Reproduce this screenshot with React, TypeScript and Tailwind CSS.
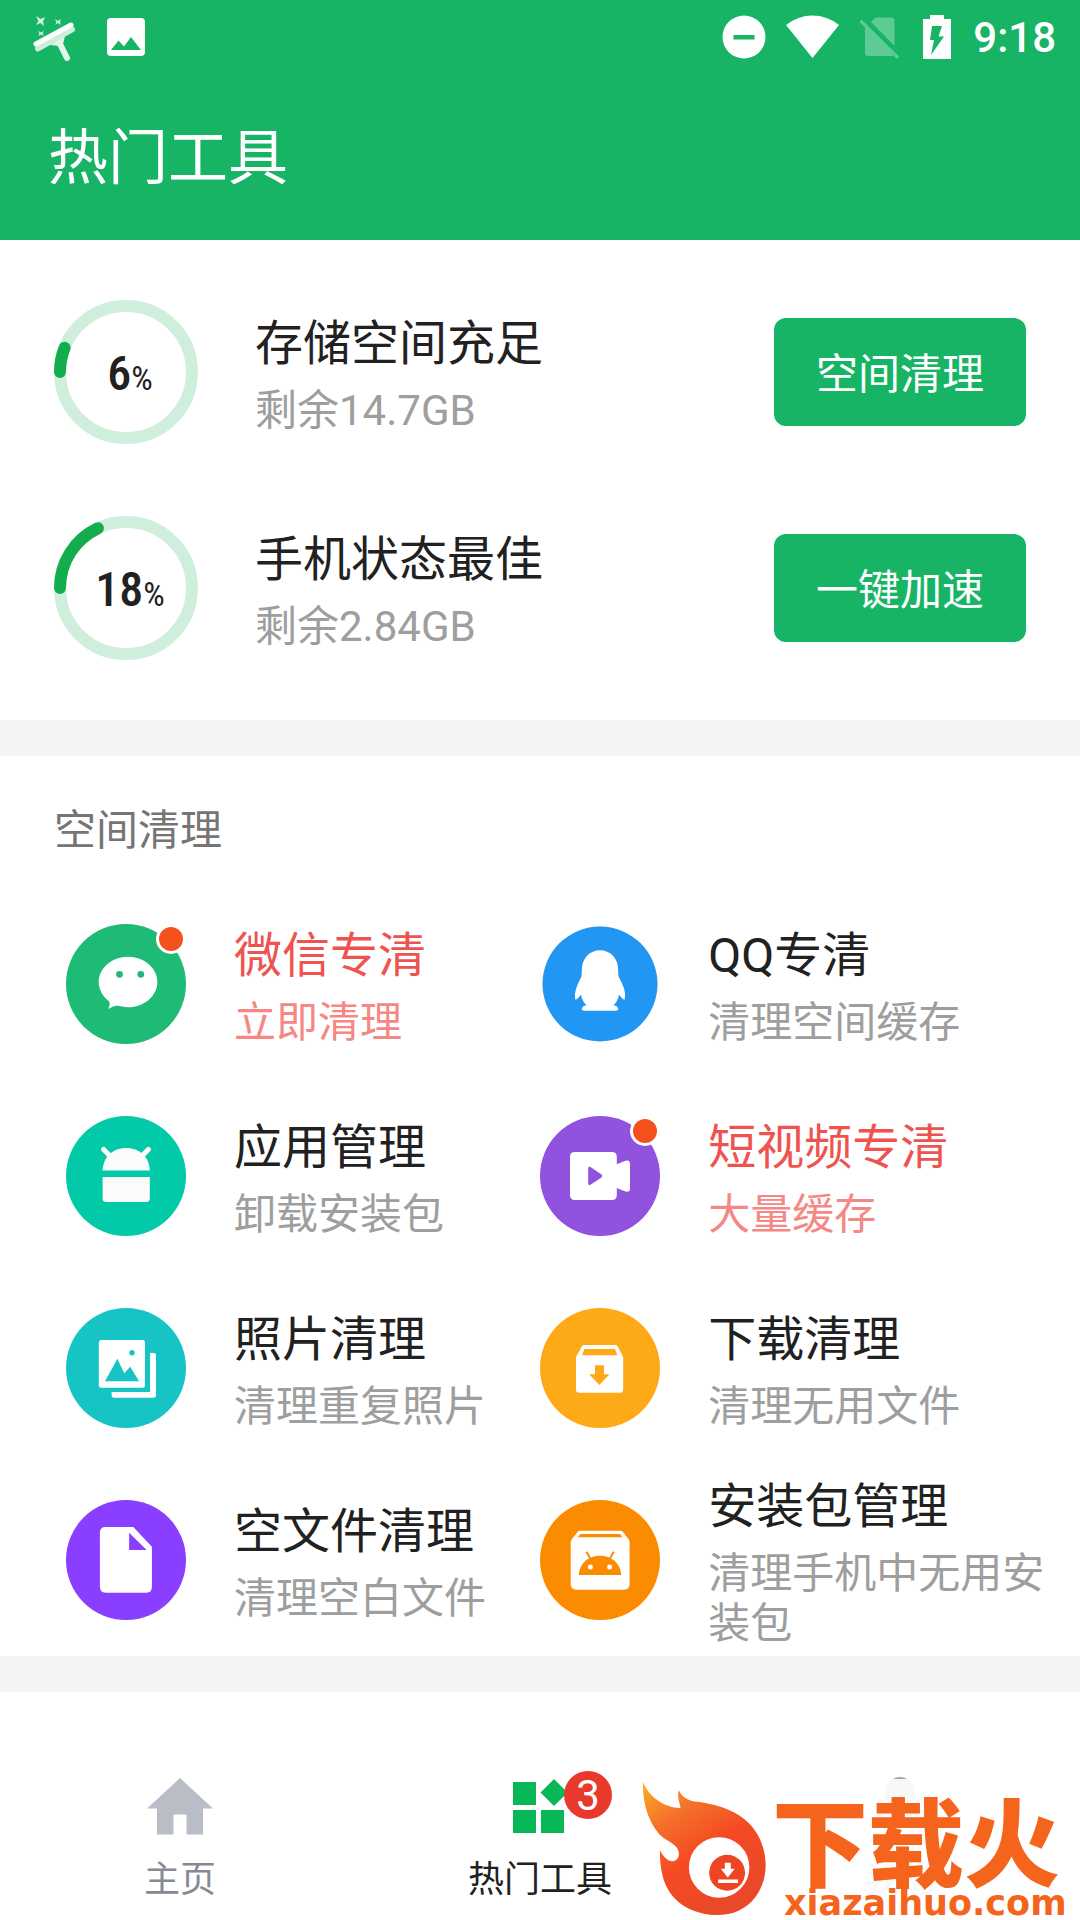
import type { ReactNode } from "react"

type Tool = {
  title: string
  desc: string
  icon: ReactNode
  hot?: boolean
}

const StatusBar = () => (
  <div className="flex h-[72px] items-center justify-between pl-[30px] pr-6 pt-0.5">
    <div className="flex items-center gap-[29px]">
      <svg className="h-12 w-12" viewBox="0 0 48 48" fill="none">
        <path d="M28 27L37 45" stroke="#e2f6eb" strokeWidth="6" strokeLinecap="round" />
        <path d="M20 32L35 23L33 31L29 33Z" fill="#e2f6eb" />
        <path d="M8 35.500L42 16.500" stroke="#cdeedd" strokeWidth="6" strokeLinecap="round" />
        <path d="M6 31L41 12" stroke="#fff" strokeWidth="5" strokeLinecap="round" />
        <path d="M6 3L10.500 6L15 4L13 8.500L14 13L10.500 10L6 12L8.500 8Z" fill="#d6f2e2" />
        <path d="M25 6L28 8L31 6L30 9L31 12L28 10L25 12L26.500 9Z" fill="#d6f2e2" />
        <path d="M8 18L11 19.500L14 18L12.500 20.500L14 23L11 21.500L8 23L9.500 20.500Z" fill="#d6f2e2" />
      </svg>
      <svg className="h-[38px] w-[38px]" viewBox="0 0 38 38">
        <rect width="38" height="38" rx="4" fill="#fff" />
        <path d="M4 32L11.500 22.500L17 28.500L24 19L34 32Z" fill="#18b466" />
      </svg>
    </div>
    <div className="flex items-center gap-5 text-white">
      <svg className="h-11 w-11" viewBox="0 0 44 44">
        <circle cx="22" cy="22" r="21.500" fill="#fff" />
        <rect x="11.500" y="20" width="21" height="4.500" fill="#18b466" />
      </svg>
      <svg className="h-11 w-[53px]" viewBox="0 0 53 44">
        <path d="M0 10Q12 0.500 26.500 0.500T53 10L26.500 43Z" fill="#fff" />
      </svg>
      <svg className="h-11 w-10" viewBox="0 0 40 44" fill="#5dcb94">
        <path d="M12 7L16.500 2.500H32Q35.500 2.500 35.500 6V31Z" />
        <path d="M6 11L34.500 40Q33.500 41 32 41H9Q6 41 6 38Z" />
        <path d="M2.500 4.500L40 41.500L38 44L0.500 7Z" />
      </svg>
      <div className="flex items-center gap-[22px] pl-1">
        <svg className="h-11 w-7" viewBox="0 0 28 44">
          <path d="M7 0H21V4H28V44H0V4H7Z" fill="#fff" />
          <path d="M9 11H19L15.500 21.500H21L8 40L11 25H7Z" fill="#18b466" />
        </svg>
        <span className="pt-0.5 text-[42px] font-medium leading-[50px]">9:18</span>
      </div>
    </div>
  </div>
)

const Ring = ({ percent }: { percent: number }) => (
  <div className="relative flex h-36 w-36 shrink-0 items-center justify-center">
    <svg className="absolute inset-0 h-full w-full" viewBox="0 0 144 144" fill="none">
      <circle cx="72" cy="72" r="66" stroke="#d0eedc" strokeWidth="12" />
      <circle
        cx="72"
        cy="72"
        r="66"
        stroke="#13ae4b"
        strokeWidth="12"
        strokeLinecap="round"
        pathLength="100"
        strokeDasharray={`${percent} 100`}
        transform="rotate(180 72 72)"
      />
    </svg>
    <div className="relative flex items-baseline pl-2 pt-2 font-['Roboto_Condensed','Open_Sans_Condensed',Roboto,sans-serif] text-[#212121]">
      <span className="text-[48px] font-medium leading-[50px]">{percent}</span>
      <span className="text-[34px] leading-[50px]">%</span>
    </div>
  </div>
)

const StatusRow = ({
  percent,
  title,
  desc,
  action,
}: {
  percent: number
  title: string
  desc: string
  action: string
}) => (
  <div className="flex h-[216px] items-center px-[54px]">
    <Ring percent={percent} />
    <div className="ml-[57px] flex flex-1 flex-col gap-3 pt-1.5">
      <h2 className="text-[48px] leading-[60px] text-[#212121]">{title}</h2>
      <p className="text-[42px] leading-[50px] text-[#9e9e9e]">{desc}</p>
    </div>
    <button className="h-[108px] w-[252px] rounded-xl bg-[#18b466] pt-1.5 text-[42px] leading-[50px] text-white">
      {action}
    </button>
  </div>
)

const WechatIcon = () => (
  <svg className="h-full w-full" viewBox="0 0 120 120">
    <circle cx="60" cy="60" r="60" fill="#1dbb75" />
    <path
      d="M62 32.700C78 32.700 91.400 44 91.400 58S78 83.300 62 83.300C58 83.300 54 81.500 50.500 81.700C47 82 45 83.500 42.300 85C43.500 82 44.300 80 43.200 77.500C37 72.500 32.700 66 32.700 58C32.700 44 46 32.700 62 32.700Z"
      fill="#fff"
    />
    <circle cx="53.500" cy="50.300" r="3.400" fill="#1dbb75" />
    <circle cx="74.800" cy="50.300" r="3.400" fill="#1dbb75" />
  </svg>
)

const QQIcon = () => (
  <svg className="h-full w-full" viewBox="0 0 120 120">
    <circle cx="60" cy="60" r="57.500" fill="#2296f3" />
    <path
      d="M60 26.300C70 26.300 78.200 34 78.200 46C78.200 48 78.200 50 78.600 52.700C82 59 85 65 85 70C85 73 85 74.500 84.500 75.700C82.500 75 80.500 73 79 70.500C78.500 75 76 79 73.600 81.300C76.500 82 78.200 83 78.200 85C78 86.500 76 86.700 73 86.700H47C44 86.700 42 86.500 41.800 85C41.800 83 43.500 82 46.400 81.300C44 79 41.500 75 41 70.500C39.500 73 37.500 75 35.400 75.700C35 74.500 35 73 35 70C35.500 65 38 59 41.400 52.700C41.800 50 41.800 48 41.800 46C42 34 50 26.300 60 26.300Z"
      fill="#fff"
    />
  </svg>
)

const AppsIcon = () => (
  <svg className="h-full w-full" viewBox="0 0 120 120">
    <circle cx="60" cy="60" r="60" fill="#02c9a8" />
    <path d="M37.500 33.300L44 40M82.500 33.300L76 40" stroke="#fbfbfb" strokeWidth="5" strokeLinecap="round" />
    <path d="M36.600 54.500C37 41 47 32 60.200 32S83.500 41 83.800 54.500Z" fill="#fbfbfb" />
    <path d="M36.600 61H83.800V82.500Q83.800 86 80.300 86H40.100Q36.600 86 36.600 82.500Z" fill="#fbfbfb" />
  </svg>
)

const VideoIcon = () => (
  <svg className="h-full w-full" viewBox="0 0 120 120">
    <circle cx="60" cy="60" r="60" fill="#9152de" />
    <rect x="30" y="36" width="46.800" height="48" rx="4.500" fill="#fff" />
    <path
      d="M76 48.500L85.500 44.700Q90 43.500 90 48V72.500Q90 76.500 85.500 75.500L76 71.700Z"
      fill="#fff"
    />
    <path d="M48.200 52Q48.500 50 50.500 51L61.500 58.500Q63 60 61.500 61.500L50.500 68.800Q48.500 69.800 48.200 68Z" fill="#9152de" />
  </svg>
)

const PhotosIcon = () => (
  <svg className="h-full w-full" viewBox="0 0 120 120">
    <circle cx="60" cy="60" r="60" fill="#16c4c6" />
    <rect x="32.800" y="32" width="46.200" height="47.700" rx="2.500" fill="#fff" />
    <path d="M39 73.300L51.400 50.700L58.300 65.300L64.200 58.700L73.100 73.300Z" fill="#16c4c6" />
    <circle cx="66" cy="44.700" r="2.700" fill="#16c4c6" />
    <path d="M84.100 45H88Q90 45 90 47V87Q90 89.700 87.300 89.700H48Q45.600 89.700 45.600 87V84H84.100Z" fill="#fff" />
  </svg>
)

const DownloadIcon = () => (
  <svg className="h-full w-full" viewBox="0 0 120 120">
    <circle cx="60" cy="60" r="60" fill="#fea918" />
    <path
      d="M44 37H75.500Q77 37 78 39L83.200 49V81.500Q83.200 84.700 80 84.700H39.200Q36 84.700 36 81.500V49L41.500 39Q42.500 37 44 37Z"
      fill="#fff"
    />
    <path d="M44.500 41H75L77.300 47.300H42Z" fill="#fea918" />
    <path d="M55 57.300H64V66.300H69.500L59.400 77L49.200 66.300H55Z" fill="#fea918" />
  </svg>
)

const FileIcon = () => (
  <svg className="h-full w-full" viewBox="0 0 120 120">
    <circle cx="60" cy="60" r="60" fill="#8a3eff" />
    <path
      d="M39.500 27H67.300L85.900 46.700V87Q85.900 92.700 80.500 92.700H39.500Q33.900 92.700 33.900 87V32.500Q33.900 27 39.500 27Z"
      fill="#fff"
    />
    <path d="M63.100 32.700V50H80.700Z" fill="#8a3eff" />
  </svg>
)

const ApkIcon = () => (
  <svg className="h-full w-full" viewBox="0 0 120 120">
    <circle cx="60" cy="60" r="60" fill="#fb8c01" />
    <path
      d="M40 30.700H80.500Q82 30.700 83 32L88.500 39Q89.600 40.500 89.600 42.500V84Q89.600 89.700 84 89.700H36.500Q30.700 89.700 30.700 84V42.500Q30.700 40.500 32 39L37.500 32Q38.500 30.700 40 30.700Z"
      fill="#fff"
    />
    <path d="M40.500 34H80L82.300 37.200H37.700Z" fill="#fb8c01" />
    <path d="M38.900 75C39 64 48 55.700 60 55.700S81 64 81.100 75Z" fill="#fb8c01" />
    <path d="M46.400 51.700L50.400 58.500M73.900 51.700L69.800 58.500" stroke="#fb8c01" strokeWidth="2" />
    <circle cx="50.400" cy="67" r="2.500" fill="#fff" />
    <circle cx="69.600" cy="67" r="2.500" fill="#fff" />
  </svg>
)

const tools: Tool[] = [
  { title: "微信专清", desc: "立即清理", icon: <WechatIcon />, hot: true },
  { title: "QQ专清", desc: "清理空间缓存", icon: <QQIcon /> },
  { title: "应用管理", desc: "卸载安装包", icon: <AppsIcon /> },
  { title: "短视频专清", desc: "大量缓存", icon: <VideoIcon />, hot: true },
  { title: "照片清理", desc: "清理重复照片", icon: <PhotosIcon /> },
  { title: "下载清理", desc: "清理无用文件", icon: <DownloadIcon /> },
  { title: "空文件清理", desc: "清理空白文件", icon: <FileIcon /> },
  { title: "安装包管理", desc: "清理手机中无用安装包", icon: <ApkIcon /> },
]

const ToolItem = ({ title, desc, icon, hot }: Tool) => (
  <button className="flex h-48 items-center gap-12 text-left">
    <span className="relative h-[120px] w-[120px] shrink-0">
      {icon}
      {hot && (
        <span className="absolute right-0 top-0 h-[30px] w-[30px] rounded-full border-3 border-white bg-[#f5511e]" />
      )}
    </span>
    <span className="flex flex-col gap-3 pt-1.5">
      <span className={`text-[48px] leading-[60px] ${hot ? "text-[#ef5350]" : "text-[#212121]"}`}>{title}</span>
      <span className={`text-[42px] leading-[50px] ${hot ? "text-[#f58784]" : "text-[#9e9e9e]"}`}>{desc}</span>
    </span>
  </button>
)

const Tab = ({ label, icon, active }: { label: string; icon: ReactNode; active?: boolean }) => (
  <button className="flex flex-1 flex-col items-center gap-[15px]">
    <span className="relative h-[72px] w-[72px]">{icon}</span>
    <span className={`text-[36px] leading-[46px] ${active ? "text-[#212121]" : "text-[#868a96]"}`}>{label}</span>
  </button>
)

const SiteMark = () => (
  <div className="absolute bottom-0 right-0 flex h-[141px] w-[443px] items-end bg-white/93">
    <svg className="mb-1 ml-[3px] h-[137px] w-32 shrink-0" viewBox="60 115 385 410">
      <defs>
        <linearGradient id="flame" x1="0" y1="0" x2="0.600" y2="1">
          <stop offset="0" stopColor="#fdb026" />
          <stop offset="0.300" stopColor="#f4702a" />
          <stop offset="0.600" stopColor="#f54a22" />
          <stop offset="1" stopColor="#e9482a" />
        </linearGradient>
      </defs>
      <path
        d="M69 122C85 165 130 200 182 201C180 185 170 168 177 148C185 168 205 178 225 182C300 190 375 215 413 280C447 340 447 415 408 468C375 512 325 528 270 522C190 512 142 465 128 405C122 380 119 355 120 328C130 348 145 363 160 361C178 358 181 338 172 322C160 305 138 300 118 280C88 245 66 190 69 122Z"
        fill="url(#flame)"
      />
      <circle cx="298" cy="380" r="91" fill="#fff" />
      <circle cx="322" cy="396" r="54" fill="#ee4524" />
      <path d="M315 366H333V384H345L324 410L303 384H315ZM295 416H355V427H295Z" fill="#fff" />
    </svg>
    <div className="flex flex-col text-[#f4641d]">
      <span className="pl-1 text-[96px] font-black leading-[80px]">下载火</span>
      <span className="pl-4 font-['DejaVu_Sans',sans-serif] text-[35px] font-bold leading-[34px]">xiazaihuo.com</span>
    </div>
  </div>
)

export default function App() {
  return (
    <div
      lang="zh-CN"
      className="flex min-h-screen flex-col bg-white font-[Roboto,'Noto_Sans_CJK_SC',sans-serif]"
    >
      <header className="bg-[#18b466] text-white">
        <StatusBar />
        <h1 className="flex h-[168px] items-center px-12 pt-1.5 text-[60px] leading-[72px]">热门工具</h1>
      </header>

      <main>
        <section className="py-6">
          <StatusRow percent={6} title="存储空间充足" desc="剩余14.7GB" action="空间清理" />
          <StatusRow percent={18} title="手机状态最佳" desc="剩余2.84GB" action="一键加速" />
        </section>
        <div className="h-9 bg-[#f4f4f4]" />
        <section>
          <h2 className="flex h-[132px] items-center px-[54px] pt-[18px] text-[42px] leading-[50px] text-[#757575]">
            空间清理
          </h2>
          <div className="grid grid-cols-[10fr_11fr] pl-[66px] pr-[18px]">
            {tools.map((tool) => (
              <ToolItem key={tool.title} {...tool} />
            ))}
          </div>
        </section>
        <div className="h-9 bg-[#f4f4f4]" />
      </main>

      <nav className="relative mt-auto flex bg-white pb-[17px] pt-[78px]">
        <Tab
          label="主页"
          icon={
            <svg className="h-full w-full" viewBox="0 0 72 72">
              <path d="M36 8L69 38.500H59V64.500H42.500V44.500H29.500V64.500H13V38.500H3Z" fill="#b9bec6" />
            </svg>
          }
        />
        <Tab
          label="热门工具"
          active
          icon={
            <>
              <svg className="h-full w-full" viewBox="0 0 72 72">
                <path
                  d="M9 12H32V35H9ZM9 40H32V63H9ZM37 40H60V63H37ZM50 9L63.500 22.500L50 36L36.500 22.500Z"
                  fill="#08b856"
                />
              </svg>
              <span className="absolute left-[60px] top-px flex h-12 w-12 items-center justify-center rounded-full bg-[#e9382c] pt-0.5 text-[42px] leading-[46px] text-white">
                3
              </span>
            </>
          }
        />
        <Tab
          label="我的"
          icon={
            <svg className="h-full w-full" viewBox="0 0 72 72">
              <ellipse cx="36" cy="23" rx="15" ry="16" fill="#9aa1ac" />
            </svg>
          }
        />
        <SiteMark />
      </nav>
    </div>
  )
}
